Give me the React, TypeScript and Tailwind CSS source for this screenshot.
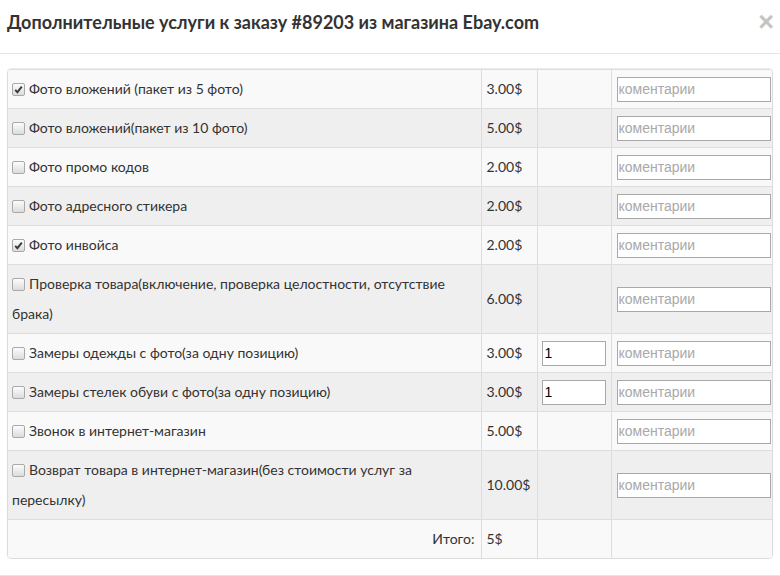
import React from 'react'

type Service = {
  name: string
  price: string
  checked?: boolean
  qty?: boolean
}

const services: Service[] = [
  { name: 'Фото вложений (пакет из 5 фото)', price: '3.00$', checked: true },
  { name: 'Фото вложений(пакет из 10 фото)', price: '5.00$' },
  { name: 'Фото промо кодов', price: '2.00$' },
  { name: 'Фото адресного стикера', price: '2.00$' },
  { name: 'Фото инвойса', price: '2.00$', checked: true },
  { name: 'Проверка товара(включение, проверка целостности, отсутствие брака)', price: '6.00$' },
  { name: 'Замеры одежды с фото(за одну позицию)', price: '3.00$', qty: true },
  { name: 'Замеры стелек обуви с фото(за одну позицию)', price: '3.00$', qty: true },
  { name: 'Звонок в интернет-магазин', price: '5.00$' },
  { name: 'Возврат товара в интернет-магазин(без стоимости услуг за пересылку)', price: '10.00$' },
]

function Check({ checked }: { checked?: boolean }) {
  return (
    <span className="relative top-[2px] mr-[4px] inline-block h-[13px] w-[13px] rounded-[2px] border border-[#a9a9a9] bg-gradient-to-b from-[#fcfcfc] to-[#dcdcdc] align-baseline">
      {checked && (
        <svg viewBox="0 0 13 13" className="absolute left-[-1px] top-[-1px] h-[13px] w-[13px]">
          <path d="M3.2 6.8 L5.4 9.2 L9.8 3.6" fill="none" stroke="#3a3a3a" strokeWidth="1.9" />
        </svg>
      )}
    </span>
  )
}

export default function App() {
  return (
    <div className="h-[576px] w-[780px] overflow-hidden bg-white font-['Lato','Noto_Sans',sans-serif] text-[14px] text-[#333]">
      {/* Header */}
      <div className="flex h-[54px] items-start justify-between border-b border-[#e5e5e5] pl-[7px] pr-[6px] pt-[10px]">
        <h4 className="text-[18px] font-bold leading-[25px] text-[#333]">
          Дополнительные услуги к заказу #89203 из магазина Ebay.com
        </h4>
        <span className="font-['Liberation_Sans',sans-serif] text-[27px] font-bold leading-[24px] text-[#c4c4c4]">×</span>
      </div>

      {/* Body */}
      <div className="px-[7px] pt-[15px]">
        <div className="overflow-hidden rounded-[4px] border border-[#dcdcdc] shadow-[0_-1px_1px_rgba(0,0,0,0.08)]">
          <table className="w-full table-fixed border-collapse">
            <colgroup>
              <col className="w-[473px]" />
              <col className="w-[56px]" />
              <col className="w-[74px]" />
              <col />
            </colgroup>
            <tbody>
              {services.map((s, i) => (
                <tr key={i} className={i % 2 === 0 ? 'bg-[#f9f9f9]' : 'bg-[#efefef]'}>
                  <td className="border-b border-r border-[#dddddd] py-[4px] pl-[4px] pr-[6px] align-middle leading-[30px]">
                    <Check checked={s.checked} />
                    {s.name}
                  </td>
                  <td className="border-b border-r border-[#dddddd] px-[5px] py-[4px] align-middle leading-[30px]">
                    {s.price}
                  </td>
                  <td className="border-b border-r border-[#dddddd] px-[4px] py-[4px] align-middle">
                    {s.qty && (
                      <input
                        defaultValue="1"
                        className="block h-[25px] w-[64px] border border-[#a9a9a9] bg-white px-[2px] font-['Liberation_Sans',sans-serif] text-[14px] text-black outline-none"
                      />
                    )}
                  </td>
                  <td className="border-b border-[#dddddd] px-[5px] py-[4px] align-middle">
                    <input
                      placeholder="коментарии"
                      className="block h-[25px] w-[154px] border border-[#a9a9a9] bg-white px-[1px] font-['Liberation_Sans',sans-serif] text-[14px] text-black outline-none placeholder:text-[#a9a9a9]"
                    />
                  </td>
                </tr>
              ))}
              <tr className="bg-[#f9f9f9]">
                <td className="border-r border-[#dddddd] px-[6px] py-[4px] text-right leading-[30px]">Итого:</td>
                <td className="border-r border-[#dddddd] px-[5px] py-[4px] leading-[30px]">5$</td>
                <td className="border-r border-[#dddddd]"></td>
                <td></td>
              </tr>
            </tbody>
          </table>
        </div>
      </div>

      {/* Footer line */}
      <div className="mt-[16px] border-t border-[#e5e5e5]" />
    </div>
  )
}
